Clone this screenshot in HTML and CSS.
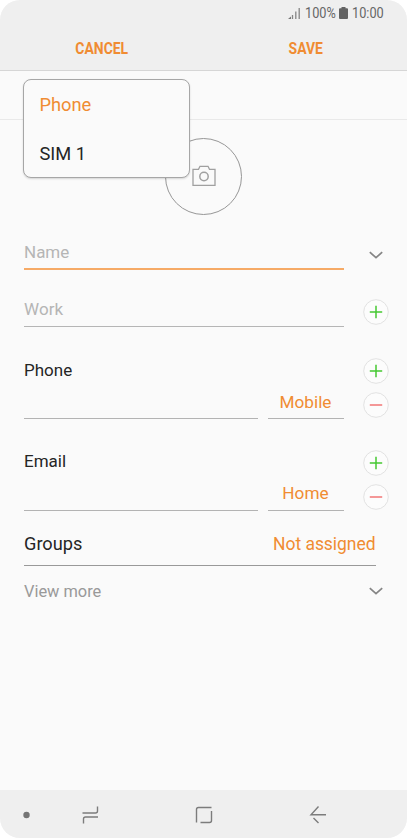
FILE: index.html
```html
<!DOCTYPE html>
<html lang="en">
<head>
<meta charset="utf-8">
<title>Create contact</title>
<link rel="stylesheet" href="styles.css">
</head>
<body>
<div class="screen">
  <header class="header">
    <div class="status">
      <svg class="signal" width="13" height="13" viewBox="0 0 13 13"><path d="M4.500 8V12M7.800 4.500V12M11.200 1V12" fill="none" stroke="#858585" stroke-width="1.300"/><path d="M0 12h3v-2.500z" fill="#777"/></svg>
      <span class="percent">100%</span>
      <svg class="battery" width="9" height="13" viewBox="0 0 9 13"><path d="M2.500 0h4v1.200H8q1 0 1 1V11q0 1-1 1H1q-1 0-1-1V2.200q0-1 1-1h1.500z" fill="#636363"/></svg>
      <span class="clock">10:00</span>
    </div>
    <div class="actions"><span class="action cancel">CANCEL</span><span class="action save">SAVE</span></div>
  </header>
  <main class="content">
    <div class="account">
      <div class="menu">
        <div class="option selected">Phone</div>
        <div class="option">SIM 1</div>
      </div>
    </div>
    <div class="photo">
      <svg width="24" height="22" viewBox="0 0 24 22" fill="none" stroke="#a0a0a0" stroke-width="1.3"><path d="M1 4.300H6.500L8 1.300H16L17.500 4.300H23V20.300H1z"/><circle cx="12" cy="11.500" r="4.200" stroke-width="1.500"/></svg>
    </div>
    <div class="row name">
      <div class="field focus">Name</div>
      <div class="side"><svg class="chevron" width="14" height="8" viewBox="0 0 14 8"><path d="M.8 1.200L7 6.700L13.200 1.200"/></svg></div>
    </div>
    <div class="row work">
      <div class="field">Work</div>
      <div class="side"><svg class="round" width="26" height="26" viewBox="0 0 26 26"><circle cx="13" cy="13" r="12.300"/><path class="plus" d="M6.800 13H19.200M13 6.800V19.200"/></svg></div>
    </div>
    <div class="row multi">
      <div class="group">
        <div class="label">Phone</div>
        <div class="inputs"><div class="value"></div><div class="type">Mobile</div></div>
      </div>
      <div class="side">
        <svg class="round" width="26" height="26" viewBox="0 0 26 26"><circle cx="13" cy="13" r="12.300"/><path class="plus" d="M6.800 13H19.200M13 6.800V19.200"/></svg>
        <svg class="round" width="26" height="26" viewBox="0 0 26 26"><circle cx="13" cy="13" r="12.300"/><path class="minus" d="M6.800 13H19.200"/></svg>
      </div>
    </div>
    <div class="row multi email">
      <div class="group">
        <div class="label">Email</div>
        <div class="inputs"><div class="value"></div><div class="type">Home</div></div>
      </div>
      <div class="side">
        <svg class="round" width="26" height="26" viewBox="0 0 26 26"><circle cx="13" cy="13" r="12.300"/><path class="plus" d="M6.800 13H19.200M13 6.800V19.200"/></svg>
        <svg class="round" width="26" height="26" viewBox="0 0 26 26"><circle cx="13" cy="13" r="12.300"/><path class="minus" d="M6.800 13H19.200"/></svg>
      </div>
    </div>
    <div class="groups"><span>Groups</span><span class="assigned">Not assigned</span></div>
    <div class="row more">
      <div class="more-text">View more</div>
      <div class="side"><svg class="chevron" width="14" height="8" viewBox="0 0 14 8"><path d="M.8 1.200L7 6.700L13.200 1.200"/></svg></div>
    </div>
  </main>
  <nav class="nav">
    <svg width="407" height="48" viewBox="0 0 407 48" fill="none" stroke="#7c7c7c" stroke-width="1.400">
      <circle cx="26.500" cy="25" r="3.200" fill="#757575" stroke="none"/>
      <path d="M82.500 23H95.500Q97.500 23 97.500 21V16.500M98 27H85.500Q83.500 27 83.500 29V33.500"/>
      <path d="M211.500 17.500H198.500Q196.500 17.500 196.500 19.500V32.500M200.500 32.500H209.500Q211.500 32.500 211.500 30.500V21"/>
      <path d="M318.500 16.500L311 24.800H326M313.500 28L318.500 33"/>
    </svg>
  </nav>
</div>
</body>
</html>
```

FILE: styles.css
```css
* { box-sizing: border-box; }
body { margin: 0; background: #fff; font-family: Roboto, "Liberation Sans", sans-serif; }
svg { display: block; flex: none; }
.screen {
  width: 407px;
  height: 838px;
  display: flex;
  flex-direction: column;
  overflow: hidden;
  border-radius: 20px;
  background: #fafafa;
  color: #252525;
  font-size: 17px;
  line-height: 24px;
}
.header { height: 71px; background: #efefef; border-bottom: 1px solid #d6d6d6; }
.status {
  height: 26px;
  padding-left: 288px;
  display: flex;
  align-items: center;
  color: #666;
  font-size: 14px;
}
.percent { margin-left: 4px; width: 31px; transform: scale(.91, 1.04); transform-origin: left; white-space: nowrap; }
.battery { margin-left: 3px; }
.clock { margin-left: 4px; transform: scale(.91, 1.04); transform-origin: left; }
.actions { display: grid; grid-template-columns: 1fr 1fr; height: 44px; padding-top: 1px; align-items: center; }
.action { color: #f08c32; font-size: 16px; font-weight: 700; text-align: center; transform: scaleX(.87); }
.content { flex: 1; }
.account { position: relative; height: 49px; border-bottom: 1px solid #e9e9e9; }
.menu {
  position: absolute;
  left: 23px;
  top: 8px;
  width: 167px;
  height: 99px;
  padding: 1px 15.5px;
  border: 1px solid #a6a6a6;
  border-radius: 8px;
  background: #fafafa;
  box-shadow: 0 1px 2px rgba(0, 0, 0, .15);
  z-index: 1;
}
.option { height: 49px; line-height: 48px; font-size: 18.3px; }
.selected, .type, .assigned { color: #f08c32; }
.photo {
  width: 77px;
  height: 77px;
  margin: 17.5px 0 .5px 165px;
  border: 1px solid #979797;
  border-radius: 50%;
  display: flex;
  align-items: center;
  justify-content: center;
}
.row { display: grid; grid-template-columns: 319.5px 26px; column-gap: 19px; padding-left: 24px; }
.field { color: #b5b5b5; border-bottom: 1px solid #b5b5b5; }
.side { display: flex; flex-direction: column; align-items: center; }
.name { height: 55px; padding-top: 25px; }
.focus { border-bottom: 2px solid #f6aa66; }
.name .side { padding-top: 11px; }
.work { height: 57px; padding-top: 27px; }
.work .field { letter-spacing: .1px; }
.work .side { padding-top: 2px; }
.multi { height: 92px; padding-top: 31px; }
.multi .side { gap: 8px; }
.group { display: flex; flex-direction: column; }
.label { margin-top: -.5px; }
.inputs { flex: 1; display: grid; grid-template-columns: 233.5px 76px; gap: 10px; margin-top: 8px; }
.value, .type { border-bottom: 1px solid #b3b3b3; }
.type { text-align: center; font-size: 17.2px; }
.email { padding-top: 30px; }
.email .side { padding-top: .5px; }
.groups {
  height: 55px;
  margin: 0 31.5px 0 24px;
  padding-top: 21px;
  display: flex;
  justify-content: space-between;
  border-bottom: 1px solid #999;
  font-size: 18.2px;
}
.assigned { font-size: 17.500px; letter-spacing: -.05px; }
.more { padding-top: 14px; }
.more-text { color: #999; font-size: 16.4px; }
.more .side { padding-top: 7px; }
.chevron { fill: none; stroke: #858585; stroke-width: 1.7; }
.round circle { fill: #fcfcfc; stroke: #e2e2e2; stroke-width: 1; }
.round path { fill: none; stroke-width: 1.5; }
.plus { stroke: #45c832; }
.minus { stroke: #f27676; }
.nav { height: 48px; background: #efefef; }
```
